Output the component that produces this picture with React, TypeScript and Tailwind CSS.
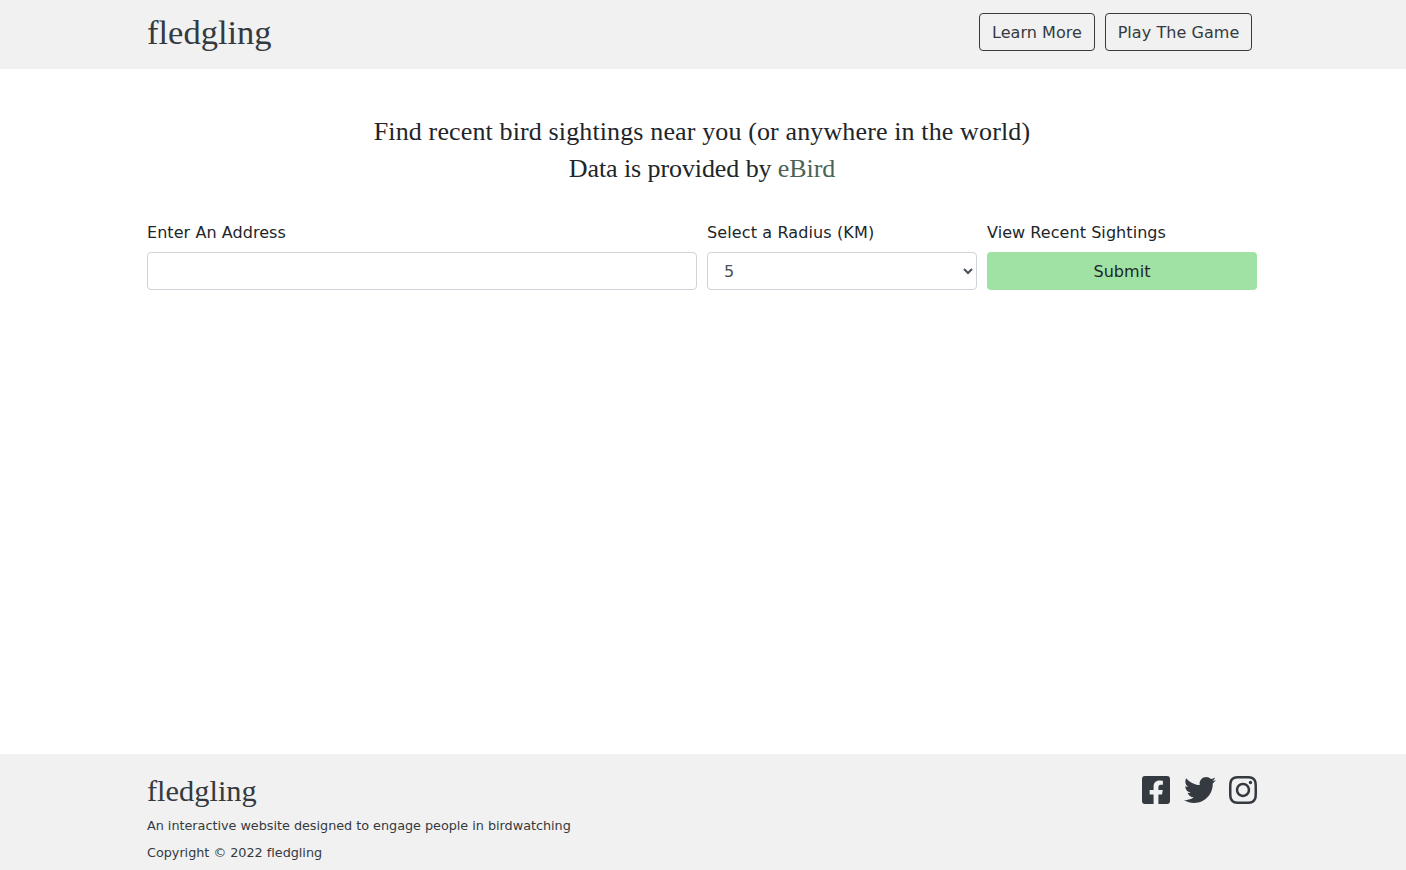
import { FaFacebookSquare, FaTwitter, FaInstagram } from "react-icons/fa";

const serif = "font-['Liberation_Serif',serif]";

export default function App() {
  return (
    <div className="flex h-[870px] flex-col bg-white font-['DejaVu_Sans',sans-serif] text-base leading-6 tracking-[0.06px] text-[#212529]">
      <header className="h-[69px] bg-[#f1f1f1] text-[#343a40]">
        <div className="ml-[147px] flex w-[1105px] items-start justify-between pt-[13px]">
          <a href="#" className={`${serif} text-[34.5px] leading-[38px] tracking-normal`}>
            fledgling
          </a>
          <nav className="flex gap-[10px]">
            <a href="#" className="flex h-[38px] w-[116px] items-center justify-center whitespace-nowrap rounded border border-[#343a40] pt-[2px]">
              Learn More
            </a>
            <a href="#" className="flex h-[38px] w-[147px] items-center justify-center whitespace-nowrap rounded border border-[#343a40] pt-[2px]">
              Play The Game
            </a>
          </nav>
        </div>
      </header>

      <main className="ml-[147px] w-[1110px] grow">
        <h1 className={`${serif} pt-[44px] text-center text-[26px] leading-[37px]`}>
          <span className="block tracking-[0.13px]">
            Find recent bird sightings near you (or anywhere in the world)
          </span>
          <span className="block tracking-[-0.09px]">
            Data is provided by <a href="#" className="text-[#4a6355]">eBird</a>
          </span>
        </h1>
        <form className="mt-[33px] grid grid-cols-[550px_270px_270px] gap-[10px]">
          <label className="flex flex-col gap-1.5">
            <span className="leading-[26px]">Enter An Address</span>
            <input type="text" className="h-[38px] rounded border border-[#ced4da] bg-white px-3" />
          </label>
          <label className="flex flex-col gap-1.5">
            <span className="leading-[26px] tracking-[0.12px]">Select a Radius (KM)</span>
            <select defaultValue="5" className="h-[38px] rounded border border-[#ced4da] bg-white px-3 text-[#495057]">
              <option>5</option>
              <option>10</option>
              <option>25</option>
            </select>
          </label>
          <div className="flex flex-col gap-1.5">
            <span className="leading-[26px]">View Recent Sightings</span>
            <button type="button" className="h-[38px] rounded bg-[#9fe2a3] pt-[2px]">
              Submit
            </button>
          </div>
        </form>
      </main>

      <footer className="h-[116px] bg-[#f1f1f1] text-[#343a40]">
        <div className="ml-[147px] flex w-[1110px] justify-between pt-[20px]">
          <div className="text-[12.8px] leading-[19px] tracking-[-0.02px]">
            <div className={`${serif} text-[30.4px] leading-[34px] tracking-normal`}>fledgling</div>
            <p className="mt-2">An interactive website designed to engage people in birdwatching</p>
            <p className="mt-2">Copyright © 2022 fledgling</p>
          </div>
          <div className="flex gap-[13.5px]">
            <FaFacebookSquare className="h-8 w-7" />
            <FaTwitter className="h-8 w-8" />
            <FaInstagram className="h-8 w-7" />
          </div>
        </div>
      </footer>
    </div>
  );
}
